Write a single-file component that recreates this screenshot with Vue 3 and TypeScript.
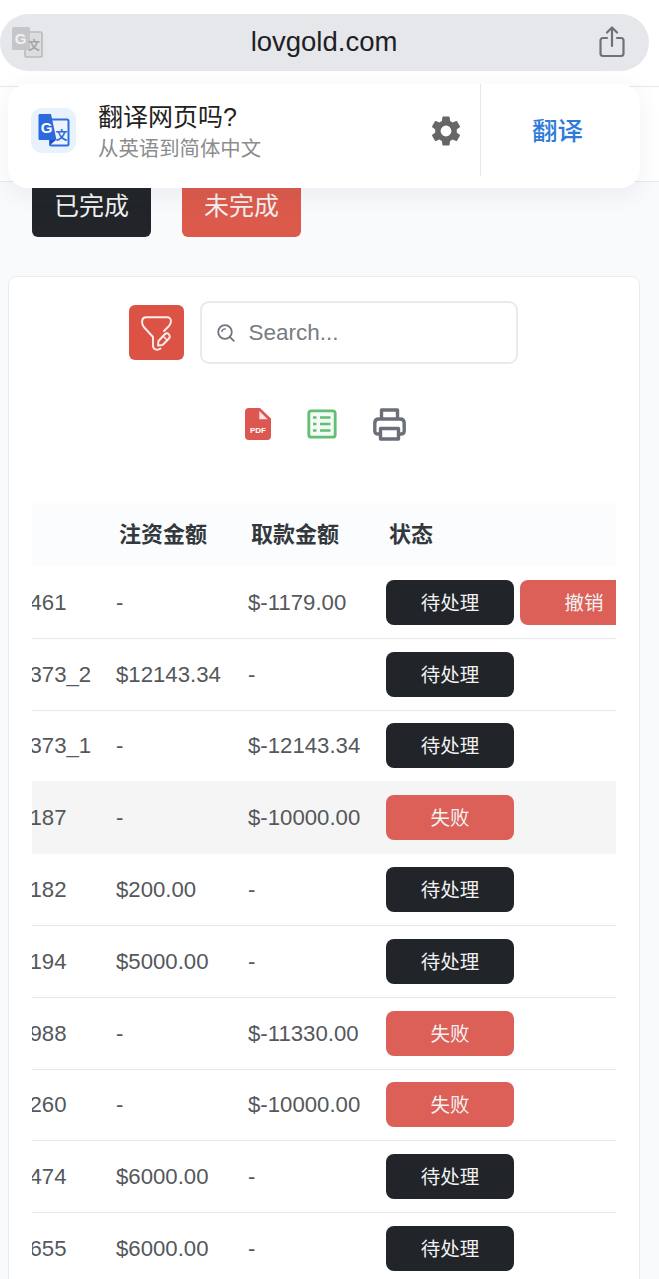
<script setup lang="ts">
interface Row {
  id: string
  deposit: string
  withdraw: string
  status: string
  cancel?: boolean
  shade?: boolean
}

const rows: Row[] = [
  { id: '461', deposit: '-', withdraw: '$-1179.00', status: '待处理', cancel: true },
  { id: '373_2', deposit: '$12143.34', withdraw: '-', status: '待处理' },
  { id: '373_1', deposit: '-', withdraw: '$-12143.34', status: '待处理' },
  { id: '187', deposit: '-', withdraw: '$-10000.00', status: '失败', shade: true },
  { id: '182', deposit: '$200.00', withdraw: '-', status: '待处理' },
  { id: '194', deposit: '$5000.00', withdraw: '-', status: '待处理' },
  { id: '988', deposit: '-', withdraw: '$-11330.00', status: '失败' },
  { id: '260', deposit: '-', withdraw: '$-10000.00', status: '失败' },
  { id: '474', deposit: '$6000.00', withdraw: '-', status: '待处理' },
  { id: '655', deposit: '$6000.00', withdraw: '-', status: '待处理' },
]
</script>

<template>
  <div class="page">
    <header class="nav"></header>
    <div class="banner"></div>

    <div class="tabs">
      <button class="tab dark">已完成</button>
      <button class="tab red">未完成</button>
    </div>

    <section class="card">
      <div class="tools">
        <button class="filter" aria-label="filter">
          <svg width="36" height="36" viewBox="0 0 36 36" fill="none" stroke="#fdeeea" stroke-width="1.900" stroke-linecap="round" stroke-linejoin="round">
            <path d="M15 22 V30.500 C15 34.500 19 36 22.500 33.500 M15 22 L5.800 12 C4.200 10 3.800 8 4.200 5.500 C4.500 3.500 5.500 2.200 8 2.200 H29 C31.500 2.200 33 4 33 6 C33 8 32.500 9 31 11 L26 16" />
            <path d="M20 30.500 L20.500 26 L27 19 C28 18 30 18 31 19.500 C32 21 32 22.500 31 23.500 L24.500 30 Z" />
            <path d="M25.500 21.500 L28.500 24.500" stroke-width="1.400" />
          </svg>
        </button>
        <label class="search">
          <svg width="22" height="22" viewBox="0 0 22 22" fill="none" stroke="#6c757d" stroke-width="1.800" stroke-linecap="round">
            <circle cx="10" cy="10" r="6.800" />
            <path d="M14.800 14.800 L18.800 18.800" />
            <path d="M6.800 9.500 C7.100 8 8.500 6.800 10.500 6.800" stroke-width="1.300" />
          </svg>
          <span class="placeholder">Search...</span>
        </label>
      </div>

      <div class="exports">
        <svg width="26" height="32" viewBox="0 0 26 32">
          <path d="M3.500 0 H15 L26 10.500 V28 C26 30.500 24.500 32 22.500 32 H3.500 C1.500 32 0 30.500 0 28 V4 C0 1.500 1.500 0 3.500 0 Z" fill="#dc5750" />
          <path d="M14.300 3 V11.300 H22.700 Z" fill="#f9e3e1" />
          <text x="13" y="25" text-anchor="middle" class="pdf">PDF</text>
        </svg>
        <svg width="30" height="30" viewBox="0 0 30 30" fill="none">
          <rect x="1.800" y="1.800" width="26.400" height="26.400" rx="2.500" fill="#f3faf4" stroke="#62bd76" stroke-width="2.800" />
          <path d="M13 8.500 H23.500 M13 15 H23.500 M13 21.500 H23.500" stroke="#62bd76" stroke-width="2.600" />
          <path d="M6 8.500 H9.500 M6 15 H9.500 M6 21.500 H9.500" stroke="#62bd76" stroke-width="2.600" />
        </svg>
        <svg width="33" height="33" viewBox="0 0 33 33" fill="none" stroke="#6b7078" stroke-width="3.400" stroke-linejoin="round">
          <path d="M8.500 11 V2 H24.500 V11" />
          <path d="M7.500 26 H5 C3 26 1.800 25 1.800 23 V15 C1.800 12.500 3.500 11 6 11 H27 C29.500 11 31.200 12.500 31.200 15 V23 C31.200 25 30 26 28 26 H25.500" />
          <path d="M7.500 20.500 H25.500 V31 H7.500 Z" />
        </svg>
      </div>

      <div class="table">
        <div class="row head">
          <div></div>
          <div>注资金额</div>
          <div>取款金额</div>
          <div>状态</div>
        </div>
        <div v-for="r in rows" :key="r.id" class="row body" :class="{ shade: r.shade }">
          <div class="id"><span>{{ r.id }}</span></div>
          <div>{{ r.deposit }}</div>
          <div>{{ r.withdraw }}</div>
          <div class="status">
            <span class="badge" :class="r.status === '失败' ? 'fail' : 'wait'">{{ r.status }}</span>
            <span v-if="r.cancel" class="badge fail">撤销</span>
          </div>
        </div>
      </div>
    </section>

    <div class="bar">
      <svg class="bar-g" width="32" height="32" viewBox="0 0 32 32">
        <rect x="14" y="6" width="17" height="25" rx="1.500" fill="#dcdddf" stroke="#b9bbbe" stroke-width="1.600" />
        <rect x="1" y="1" width="18" height="23" rx="1.500" fill="#c4c6c9" />
        <text x="9.500" y="17.500" text-anchor="middle" class="g-light">G</text>
        <text x="23" y="24" text-anchor="middle" class="zh-light">文</text>
      </svg>
      <span class="url">lovgold.com</span>
      <svg class="share" width="26" height="32" viewBox="0 0 26 32" fill="none" stroke="#6f7175" stroke-width="2.200" stroke-linecap="round" stroke-linejoin="round">
        <path d="M8 12 H4 C2.500 12 1.500 13 1.500 14.500 V27.500 C1.500 29 2.500 30 4 30 H22 C23.500 30 24.500 29 24.500 27.500 V14.500 C24.500 13 23.500 12 22 12 H18" />
        <path d="M13 20 V2 M8 6.500 L13 1.500 L18 6.500" />
      </svg>
    </div>

    <div class="popup">
      <div class="tile">
        <svg width="32" height="34" viewBox="0 0 32 34">
          <rect x="12" y="5.500" width="18.500" height="26" rx="1.500" fill="#eef4fd" stroke="#2f6ddb" stroke-width="2" />
          <path d="M12 26 H18 L12 31 Z" fill="#1d4fb5" />
          <path d="M2 0 H13 L18.500 26 H2 C1 26 0.500 25.500 0.500 24.500 V1.500 C0.500 0.500 1 0 2 0 Z" fill="#2c69dc" />
          <text x="8.500" y="18.500" text-anchor="middle" class="g-blue">G</text>
          <text x="23.500" y="26" text-anchor="middle" class="zh-blue">文</text>
        </svg>
      </div>
      <div class="copy">
        <div class="title">翻译网页吗?</div>
        <div class="sub">从英语到简体中文</div>
      </div>
      <svg class="gear" width="36" height="36" viewBox="0 0 24 24">
        <path fill="#666" d="M19.140 12.940c.040-.300.060-.610.060-.940s-.020-.640-.070-.940l2.030-1.580a.490.490 0 0 0 .120-.610l-1.920-3.320a.490.490 0 0 0-.590-.220l-2.390.960c-.500-.380-1.030-.700-1.620-.940l-.360-2.540a.480.480 0 0 0-.480-.410h-3.840a.480.480 0 0 0-.470.410l-.360 2.540c-.590.240-1.130.570-1.620.940l-2.390-.960a.480.480 0 0 0-.590.220L2.740 8.870a.480.480 0 0 0 .120.610l2.030 1.580c-.050.300-.090.630-.090.940s.020.640.070.940l-2.030 1.580a.490.490 0 0 0-.120.610l1.920 3.320c.120.220.370.290.590.220l2.390-.960c.500.380 1.030.700 1.620.940l.360 2.540c.050.240.240.410.480.410h3.840c.240 0 .440-.170.470-.410l.360-2.540c.590-.240 1.130-.560 1.620-.940l2.390.960c.220.080.470 0 .590-.220l1.920-3.320a.480.480 0 0 0-.120-.610l-2.010-1.580zM12 15.600A3.600 3.600 0 1 1 12 8.400a3.600 3.600 0 0 1 0 7.200z" />
      </svg>
      <div class="action"><span>翻译</span></div>
    </div>
  </div>
</template>

<style>
html, body { margin: 0; background: #fff; }
</style>

<style scoped>
.page {
  position: relative;
  width: 659px;
  height: 1279px;
  overflow: hidden;
  background: #f8fafc;
  color: #212529;
  font-family: "Liberation Sans", "Noto Sans CJK SC", sans-serif;
}
.nav { height: 87px; background: #fff; border-bottom: 1px solid #e6e8eb; box-sizing: border-box; }
.banner { height: 95px; background: #fff; border-bottom: 1px solid #e6e8eb; box-sizing: border-box; }

.tabs { display: flex; gap: 31px; padding-left: 32px; margin-top: -8px; }
.tab {
  width: 119px;
  height: 63px;
  padding: 0 0 4px;
  border: 0;
  border-radius: 6px;
  color: #f0f0f0;
  font: 400 25px "Liberation Sans", "Noto Sans CJK SC", sans-serif;
}
.tab.dark { background: #212529; }
.tab.red { background: #dc5a4b; }

.card {
  margin: 39px 19px 0 8px;
  height: 1100px;
  box-sizing: border-box;
  padding: 24px 23px 0;
  background: #fff;
  border: 1px solid #e9ecef;
  border-radius: 8px;
}
.tools { display: flex; align-items: center; justify-content: center; gap: 16px; margin-right: 2px; }
.filter {
  display: flex;
  align-items: center;
  justify-content: center;
  width: 55px;
  height: 55px;
  padding: 0;
  border: 0;
  border-radius: 6px;
  background: #dc5346;
}
.search {
  display: flex;
  align-items: center;
  gap: 12px;
  width: 318px;
  height: 63px;
  box-sizing: border-box;
  padding-left: 13px;
  border: 2px solid #e8eaec;
  border-radius: 9px;
  background: #fff;
}
.placeholder { color: #777c82; font-size: 22.500px; }

.exports { display: flex; align-items: center; justify-content: center; gap: 36px; margin-top: 43px; padding: 0 1px 0 3px; height: 34px; }
.pdf { fill: #fff; font: 700 8px "Liberation Sans", sans-serif; }

.table { margin-top: 62px; width: 584px; overflow: hidden; }
.row {
  display: grid;
  grid-template-columns: 84px 132px 138px 230px;
  align-items: center;
  box-sizing: border-box;
  font-size: 22.200px;
}
.head { height: 63px; padding-bottom: 6px; background: #fafcfd; font-weight: 700; color: #33383d; font-size: 22px; }
.head > div { padding-left: 3px; }
.body { height: 71.800px; color: #54585c; border-bottom: 1px solid #e6e8ea; }
.body > div { padding-top: 1px; }
.head + .body { margin-top: 1px; }
.shade { background: #f5f5f5; border-bottom-color: #f5f5f5; box-shadow: 0 -1px 0 #f5f5f5; }
.id { overflow: hidden; white-space: nowrap; }
.id span { display: inline-block; margin-left: -2.500px; }
.body > .status { display: flex; gap: 6px; padding-top: 0; }
.badge {
  flex: none;
  display: flex;
  align-items: center;
  justify-content: center;
  width: 128px;
  height: 45px;
  padding-bottom: 2px;
  box-sizing: border-box;
  border-radius: 8px;
  font-size: 19.500px;
  color: #f2f2f2;
}
.wait { background: #212529; }
.fail { background: #dc5f58; }

.bar {
  position: absolute;
  left: 0;
  top: 14px;
  width: 649px;
  height: 57px;
  padding-bottom: 2px;
  box-sizing: border-box;
  border-radius: 29px;
  background: #e5e7eb;
  display: flex;
  align-items: center;
  justify-content: center;
}
.bar-g { position: absolute; left: 11px; top: 12px; }
.share { position: absolute; left: 599px; top: 12px; }
.url { color: #1f2023; font-size: 27.500px; margin-left: -1px; }
.g-light { fill: #f0f0f0; font: 700 15px "Liberation Sans", sans-serif; }
.zh-light { fill: #a3a5a8; font: 700 12px "Noto Sans CJK SC", sans-serif; }
.g-blue { fill: #fff; font: 700 15px "Liberation Sans", sans-serif; }
.zh-blue { fill: #2f6ddb; font: 700 12px "Noto Sans CJK SC", sans-serif; }

.popup {
  position: absolute;
  left: 8px;
  top: 84px;
  width: 632px;
  height: 104px;
  border-radius: 20px;
  background: #fff;
  box-shadow: 0 6px 24px rgba(60, 70, 90, 0.08);
  display: flex;
  align-items: center;
  box-sizing: border-box;
  padding: 0 0 9px 23px;
}
.tile {
  flex: none;
  display: flex;
  align-items: center;
  justify-content: center;
  width: 45px;
  height: 45px;
  margin-top: -2px;
  border-radius: 11px;
  background: #e8f2fd;
}
.copy { margin-left: 22px; width: 330px; margin-top: -2px; }
.title { font-size: 25px; line-height: 34px; color: #222; }
.sub { font-size: 20.400px; line-height: 26px; color: #8c8c8c; margin-top: 2px; }
.gear { flex: none; margin-top: -2px; }
.action {
  flex: none;
  width: 160px;
  height: 92px;
  margin-left: 16px;
  margin-top: -3px;
  padding: 0 6px 4px 0;
  box-sizing: border-box;
  border-left: 1px solid #e8e8e8;
  display: flex;
  align-items: center;
  justify-content: center;
  color: #2f7bd9;
  font-size: 25.500px;
  font-weight: 500;
}
</style>
